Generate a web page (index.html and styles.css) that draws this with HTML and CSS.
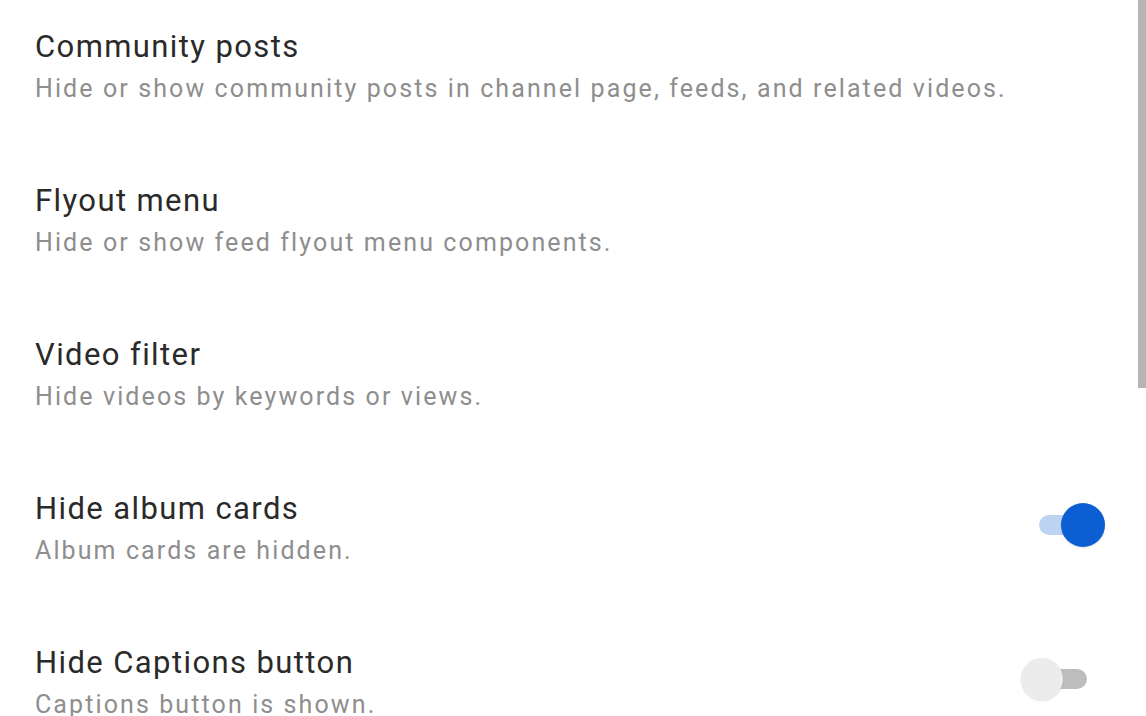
FILE: index.html
```html
<!DOCTYPE html>
<html lang="en">
    <head>
        <meta charset="UTF-8" />
        <meta name="viewport" content="width=device-width, initial-scale=1.0" />
        <title>Feed settings</title>
        <link rel="stylesheet" href="styles.css">
    </head>
    <body>
        <!--Settings list-->
        <main id="settings">
            <div class="row">
                <div class="text">
                    <div class="title">Community posts</div>
                    <div class="summary">Hide or show community posts in channel page, feeds, and related videos.</div>
                </div>
            </div>
            <div class="row">
                <div class="text">
                    <div class="title">Flyout menu</div>
                    <div class="summary">Hide or show feed flyout menu components.</div>
                </div>
            </div>
            <div class="row">
                <div class="text">
                    <div class="title">Video filter</div>
                    <div class="summary">Hide videos by keywords or views.</div>
                </div>
            </div>
            <div class="row">
                <div class="text">
                    <div class="title">Hide album cards</div>
                    <div class="summary">Album cards are hidden.</div>
                </div>
                <div class="switch on"><span class="track"></span><span class="thumb"></span></div>
            </div>
            <div class="row">
                <div class="text">
                    <div class="title">Hide Captions button</div>
                    <div class="summary">Captions button is shown.</div>
                </div>
                <div class="switch"><span class="track"></span><span class="thumb"></span></div>
            </div>
        </main>
        <!--Scrollbar-->
        <div class="scrollbar"></div>
    </body>
</html>
```

FILE: styles.css
```css
/* Settings CSS */
:root {
    --title: #2a2a2a;
    --summary: #8e8e8e;
    --accent: #0b5fd3;
    --accent-light: #bcd3f2;
}
body {
    margin: 0;
    background-color: #fff;
    font-family: Roboto, "Noto Sans", sans-serif;
    overflow: hidden;
}
#settings {
    margin-top: -10px;
    padding: 0 41px 0 35px;
}
.row {
    display: flex;
    align-items: center;
    justify-content: space-between;
    padding: 39px 0 40px;
}
.title {
    color: var(--title);
    font-size: 31px;
    line-height: 36px;
    letter-spacing: 1.4px;
}
.summary {
    margin-top: 9px;
    color: var(--summary);
    font-size: 25px;
    line-height: 30px;
    letter-spacing: 2.1px;
}
/* Switch */
.switch {
    position: relative;
    width: 66px;
    height: 44px;
    margin-bottom: 8px;
}
.switch .track {
    position: absolute;
    left: 0;
    top: 12px;
    width: 48px;
    height: 20px;
    border-radius: 10px;
    background-color: #bdbdbd;
}
.switch .thumb {
    position: absolute;
    left: -18px;
    top: 1px;
    width: 42px;
    height: 42px;
    border-radius: 50%;
    background-color: #ececec;
    box-shadow: 0 1px 2px rgba(0, 0, 0, 0.12);
}
.switch.on .track {
    background-color: var(--accent-light);
}
.switch.on .thumb {
    left: 22px;
    top: 0;
    width: 44px;
    height: 44px;
    background-color: var(--accent);
}
.scrollbar {
    position: absolute;
    top: 0;
    right: 0;
    width: 8px;
    height: 388px;
    background-color: #b4b4b4;
}
```
